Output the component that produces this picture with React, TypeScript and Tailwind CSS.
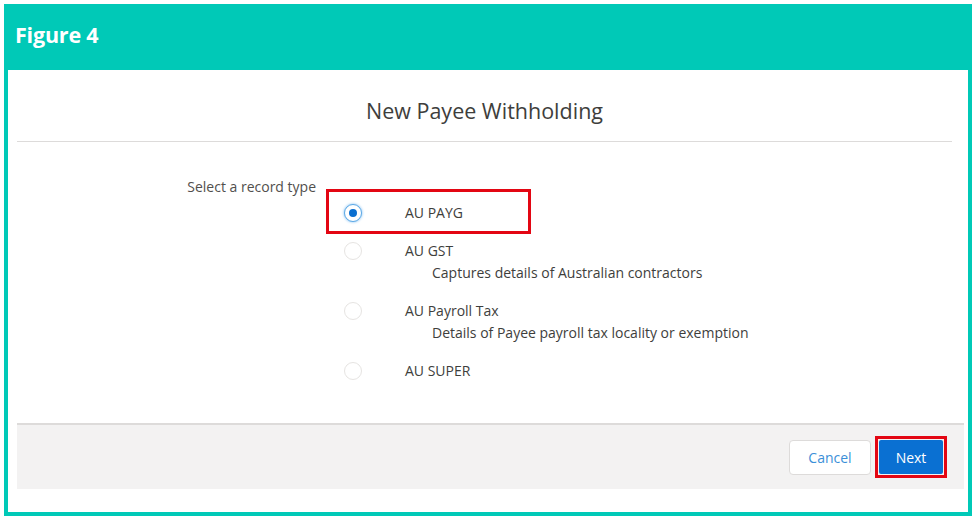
import { useState } from 'react'

interface RecordType {
  id: string
  label: string
  description?: string
}

const recordTypes: RecordType[] = [
  { id: 'payg', label: 'AU PAYG' },
  { id: 'gst', label: 'AU GST', description: 'Captures details of Australian contractors' },
  { id: 'payroll', label: 'AU Payroll Tax', description: 'Details of Payee payroll tax locality or exemption' },
  { id: 'super', label: 'AU SUPER' },
]

export default function App() {
  const [selected, setSelected] = useState('payg')

  return (
    <div className="w-[976px] h-[518px] bg-white pt-1 pl-1 font-['Open_Sans',sans-serif] text-[#3e3e3c]">
      <div className="w-[968px] h-[512px] border-4 border-[#00c9b7] flex flex-col">
        <div className="h-[62px] shrink-0 bg-[#00c9b7] flex items-center pl-[7px] pb-[8px]">
          <span className="text-[21.5px] font-bold text-white tracking-[-0.2px]">Figure 4</span>
        </div>

        <div className="flex-1 flex flex-col">
          <div className="ml-[9px] mr-[16px] border-b border-[#dddbda] pt-[27px] pb-[16px] text-center">
            <h1 className="text-[21.5px] leading-[28px] text-[#3e3e3c]">New Payee Withholding</h1>
          </div>

          <div className="flex-1 ml-[9px] pt-[35px] grid grid-cols-[299px_1fr] gap-x-[28px] items-start">
            <div className="text-right text-[14px] leading-[20px] text-[#514f4d]">Select a record type</div>
            <div className="pt-[26px] flex flex-col gap-[18px]">
              {recordTypes.map(r => {
                const on = selected === r.id
                return (
                  <div key={r.id} className="relative">
                    {r.id === 'payg' && (
                      <span className="absolute left-[-18px] top-[-14px] w-[205px] h-[45px] border-[3px] border-[#e30613] pointer-events-none" />
                    )}
                    <label className="flex items-center h-[20px] cursor-pointer" onClick={() => setSelected(r.id)}>
                      <span className="w-[61px] shrink-0">
                        <span className={`w-[18px] h-[18px] rounded-full border flex items-center justify-center bg-white ${on ? 'border-[#5aa8e6] shadow-[0_0_3px_#74b8f0]' : 'border-[#e6e4e2]'}`}>
                          {on && <span className="w-[8px] h-[8px] rounded-full bg-[#0a6fd0]" />}
                        </span>
                      </span>
                      <span className="text-[14px] leading-[20px]">{r.label}</span>
                    </label>
                    {r.description && (
                      <div className="mt-[2px] pl-[88px] text-[14px] leading-[20px]">{r.description}</div>
                    )}
                  </div>
                )
              })}
            </div>
          </div>

          <div className="h-[66px] shrink-0 ml-[9px] mr-[4px] bg-[#f3f2f2] border-t-2 border-[#dddbda] flex items-center justify-end pr-[17px] gap-[4px]">
            <button className="w-[82px] h-[35px] bg-white border border-[#dddbda] rounded-[4px] text-[14px] text-[#3b8fd8]">Cancel</button>
            <div className="border-[3px] border-[#e30613] p-px">
              <button className="w-[64px] h-[34px] bg-[#0a70d2] rounded-[2px] text-[14px] font-medium text-white">Next</button>
            </div>
          </div>

          <div className="h-[23px] shrink-0" />
        </div>
      </div>
    </div>
  )
}
